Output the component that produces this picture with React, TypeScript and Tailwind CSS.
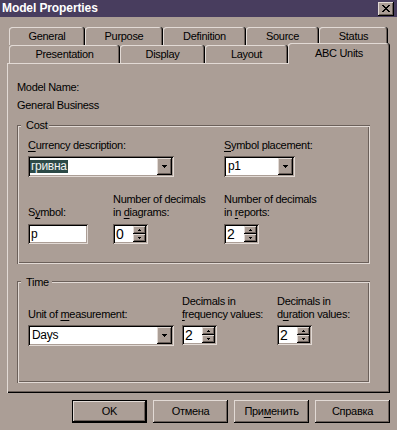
import React from 'react';

const RAISED = 'shadow-[inset_-1px_-1px_0_#000,inset_1px_1px_0_#e2dad5,inset_-2px_-2px_0_#6b605a]';
const SUNKEN = 'shadow-[inset_1px_1px_0_#6b605a,inset_-1px_-1px_0_#e2dad5,inset_2px_2px_0_#000,inset_-2px_-2px_0_#ab9e96]';
const ETCHED = 'shadow-[inset_1px_1px_0_#6b605a,inset_-1px_-1px_0_#e2dad5,inset_2px_2px_0_#e2dad5,inset_-2px_-2px_0_#6b605a]';
const TAB = 'shadow-[inset_-1px_0_0_#000,inset_1px_1px_0_#e2dad5,inset_-2px_0_0_#6b605a] rounded-t-[3px]';

function DownArrow() {
  return (
    <svg width="5" height="3" viewBox="0 0 5 3" shapeRendering="crispEdges">
      <rect x="0" y="0" width="5" height="1" fill="#000" />
      <rect x="1" y="1" width="3" height="1" fill="#000" />
      <rect x="2" y="2" width="1" height="1" fill="#000" />
    </svg>
  );
}

function SmallArrow({ up }: { up?: boolean }) {
  return (
    <svg width="3" height="2" viewBox="0 0 3 2" shapeRendering="crispEdges">
      {up ? (
        <>
          <rect x="1" y="0" width="1" height="1" fill="#000" />
          <rect x="0" y="1" width="3" height="1" fill="#000" />
        </>
      ) : (
        <>
          <rect x="0" y="0" width="3" height="1" fill="#000" />
          <rect x="1" y="1" width="1" height="1" fill="#000" />
        </>
      )}
    </svg>
  );
}

function Combo({ className, children }: { className: string; children: React.ReactNode }) {
  return (
    <div className={`flex h-[21px] bg-white p-[2px] ${SUNKEN} ${className}`}>
      <div className="flex flex-1 items-center text-[12px] leading-[13px] text-black">{children}</div>
      <div className={`flex w-[15px] items-center justify-center bg-[#ab9e96] ${RAISED}`}>
        <DownArrow />
      </div>
    </div>
  );
}

function Spin({ value }: { value: string }) {
  return (
    <div className={`flex h-[20px] w-[35px] bg-white p-[2px] ${SUNKEN}`}>
      <div className="flex flex-1 items-center pl-[1px] text-[14px] leading-[14px] text-black">{value}</div>
      <div className="flex w-[13px] flex-col">
        <div className={`flex flex-1 items-center justify-center bg-[#ab9e96] ${RAISED}`}>
          <SmallArrow up />
        </div>
        <div className={`flex flex-1 items-center justify-center bg-[#ab9e96] ${RAISED}`}>
          <SmallArrow />
        </div>
      </div>
    </div>
  );
}

function Tab({ className, children }: { className: string; children: React.ReactNode }) {
  return (
    <div className={`flex h-[18px] items-center justify-center pt-[1px] ${TAB} ${className}`}>{children}</div>
  );
}

function Btn({ children, def }: { children: React.ReactNode; def?: boolean }) {
  return (
    <div
      className={`flex h-[23px] w-[75px] items-center justify-center bg-[#ab9e96] ${
        def ? 'border border-black' : ''
      } ${RAISED}`}
    >
      {children}
    </div>
  );
}

function U({ children }: { children: React.ReactNode }) {
  return <span className="underline underline-offset-[2px]">{children}</span>;
}

export default function App() {
  return (
    <div className="flex h-[430px] w-[397px] flex-col overflow-hidden bg-[#ab9e96] font-['Liberation_Sans',Arial,sans-serif] text-[11px] leading-[13px] tracking-[-0.3px] text-black">
      {/* Title bar */}
      <div className="flex h-[17px] items-center justify-between bg-[#483d5e] pl-[2px] pr-[3px]">
        <span className="text-[12px] font-bold leading-[17px] tracking-[-0.1px] text-white">Model Properties</span>
        <div className={`flex h-[14px] w-[16px] items-center justify-center bg-[#ab9e96] ${RAISED}`}>
          <svg width="8" height="7" viewBox="0 0 8 7" shapeRendering="crispEdges">
            <path d="M0 0h2v1h-2zM6 0h2v1h-2zM1 1h2v1h-2zM5 1h2v1h-2zM2 2h4v1h-4zM3 3h2v1h-2zM2 4h4v1h-4zM1 5h2v1h-2zM5 5h2v1h-2zM0 6h2v1h-2zM6 6h2v1h-2z" fill="#000" />
          </svg>
        </div>
      </div>

      {/* Tabs */}
      <div className="mt-[10px] pl-[9px]">
        <div className="flex h-[18px]">
          <Tab className="w-[76px]">General</Tab>
          <Tab className="w-[78px]">Purpose</Tab>
          <Tab className="w-[83px]">Definition</Tab>
          <Tab className="w-[73px]">Source</Tab>
          <Tab className="w-[69px]">Status</Tab>
        </div>
        <div className="flex h-[18px] items-end">
          <Tab className="w-[111px]">Presentation</Tab>
          <Tab className="w-[85px]">Display</Tab>
          <Tab className="w-[83px]">Layout</Tab>
          <div
            className={`relative z-10 -mb-px flex h-[21px] w-[102px] items-center justify-center bg-[#ab9e96] pb-[1px] ${TAB}`}
          >
            ABC Units
          </div>
        </div>
      </div>

      {/* Panel */}
      <div
        className={`ml-[7px] h-[330px] w-[383px] pl-[10px] pt-[18px] shadow-[inset_1px_1px_0_#e2dad5,inset_-1px_-1px_0_#000,inset_-2px_-2px_0_#6b605a]`}
      >
        <p>Model Name:</p>
        <p className="mt-[5px]">General Business</p>

        {/* Cost group */}
        <div className={`relative mt-[13px] h-[139px] w-[353px] pl-[11px] pt-[14px] ${ETCHED}`}>
          <span className="absolute left-[4px] top-[-6px] bg-[#ab9e96] pl-[5px] pr-[2px]">Cost</span>
          <div className="flex">
            <div className="w-[196px]">
              <p>
                <U>C</U>urrency description:
              </p>
              <Combo className="mt-[4px] w-[146px]">
                <span className="bg-[#2c4a47] px-[1px] text-[#eef2f0]">гривна</span>
              </Combo>
            </div>
            <div>
              <p>
                <U>S</U>ymbol placement:
              </p>
              <Combo className="mt-[4px] w-[71px]">
                <span className="pl-[2px]">p1</span>
              </Combo>
            </div>
          </div>
          <div className="mt-[16px] flex items-start">
            <div className="w-[85px]">
              <p className="mt-[13px]">
                S<U>y</U>mbol:
              </p>
              <div className={`mt-[5px] flex h-[20px] w-[60px] items-center bg-white pl-[3px] text-[12px] ${SUNKEN}`}>
                p
              </div>
            </div>
            <div className="w-[111px]">
              <p>Number of decimals</p>
              <p>
                in <U>d</U>iagrams:
              </p>
              <div className="mt-[5px]">
                <Spin value="0" />
              </div>
            </div>
            <div>
              <p>Number of decimals</p>
              <p>
                in <U>r</U>eports:
              </p>
              <div className="mt-[5px]">
                <Spin value="2" />
              </div>
            </div>
          </div>
        </div>

        {/* Time group */}
        <div className={`relative mt-[17px] h-[102px] w-[353px] pl-[11px] pt-[14px] ${ETCHED}`}>
          <span className="absolute left-[4px] top-[-5px] bg-[#ab9e96] pl-[5px] pr-[3px]">Time</span>
          <div className="flex items-start">
            <div className="w-[154px]">
              <p className="mt-[13px]">
                Unit of <U>m</U>easurement:
              </p>
              <Combo className="mt-[4px] w-[146px]">
                <span className="pl-[2px]">Days</span>
              </Combo>
            </div>
            <div className="w-[95px]">
              <p>Decimals in</p>
              <p>
                <U>f</U>requency values:
              </p>
              <div className="mt-[4px]">
                <Spin value="2" />
              </div>
            </div>
            <div>
              <p>Decimals in</p>
              <p>
                d<U>u</U>ration values:
              </p>
              <div className="mt-[4px]">
                <Spin value="2" />
              </div>
            </div>
          </div>
        </div>
      </div>

      {/* Buttons */}
      <div className="mt-[7px] flex justify-end gap-[6px] pr-[7px]">
        <Btn def>OK</Btn>
        <Btn>Отмена</Btn>
        <Btn>
          При<U>м</U>енить
        </Btn>
        <Btn>Справка</Btn>
      </div>
    </div>
  );
}
